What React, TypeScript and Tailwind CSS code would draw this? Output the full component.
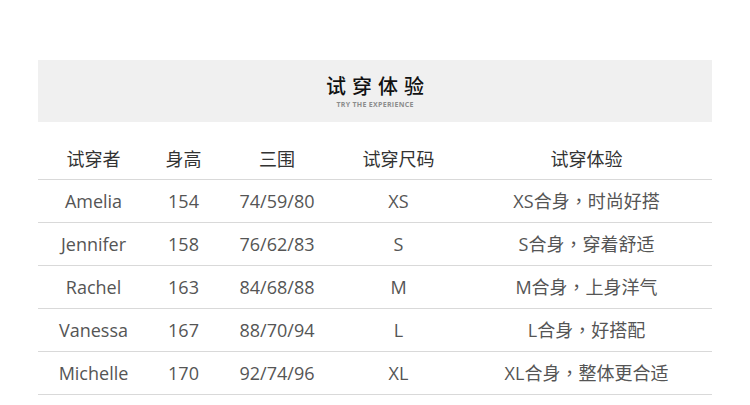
import React from 'react';

const rows = [
  ['Amelia', '154', '74/59/80', 'XS', 'XS合身|时尚好搭'],
  ['Jennifer', '158', '76/62/83', 'S', 'S合身|穿着舒适'],
  ['Rachel', '163', '84/68/88', 'M', 'M合身|上身洋气'],
  ['Vanessa', '167', '88/70/94', 'L', 'L合身|好搭配'],
  ['Michelle', '170', '92/74/96', 'XL', 'XL合身|整体更合适'],
];

const heads = ['试穿者', '身高', '三围', '试穿尺码', '试穿体验'];

const cols = 'grid grid-cols-[111px_69px_118px_125px_1fr]';

// full-width comma drawn centred in its box, as in the source
const Remark = ({ text }: { text: string }) => {
  const [a, b] = text.split('|');
  return (
    <>
      {a}
      <span className="font-['Noto_Sans_CJK_TC',sans-serif]">，</span>
      {b}
    </>
  );
};

const App = () => {
  return (
    <div className="w-[750px] h-[405px] bg-white overflow-hidden font-['Open_Sans','Noto_Sans_CJK_SC',sans-serif]">
      <div className="mx-[38px] pt-[60px]">
        {/* title band */}
        <div className="h-[62px] bg-[#f0f0f0] flex flex-col items-center justify-center">
          <h2 className="text-[20px] leading-[22px] font-medium tracking-[6px] pl-[6px] text-[#111] mt-[2px]">试穿体验</h2>
          <p className="text-[7px] leading-[8px] tracking-[0.3px] text-[#8c8c8c] font-bold mt-[3px]">TRY THE EXPERIENCE</p>
        </div>

        {/* table */}
        <div className="mt-[18px]">
          <div className={`${cols} h-[40px] border-b border-[#d9d9d9] items-center text-[18px] text-[#333]`}>
            {heads.map((h) => (
              <div key={h} className="text-center">{h}</div>
            ))}
          </div>
          {rows.map((r) => (
            <div key={r[0]} className={`${cols} h-[43px] border-b border-[#d9d9d9] items-center text-[18px] text-[#555]`}>
              {r.slice(0, 4).map((c, i) => (
                <div key={i} className="text-center">{c}</div>
              ))}
              <div className="text-center"><Remark text={r[4]} /></div>
            </div>
          ))}
        </div>
      </div>
    </div>
  );
};

export default App;
